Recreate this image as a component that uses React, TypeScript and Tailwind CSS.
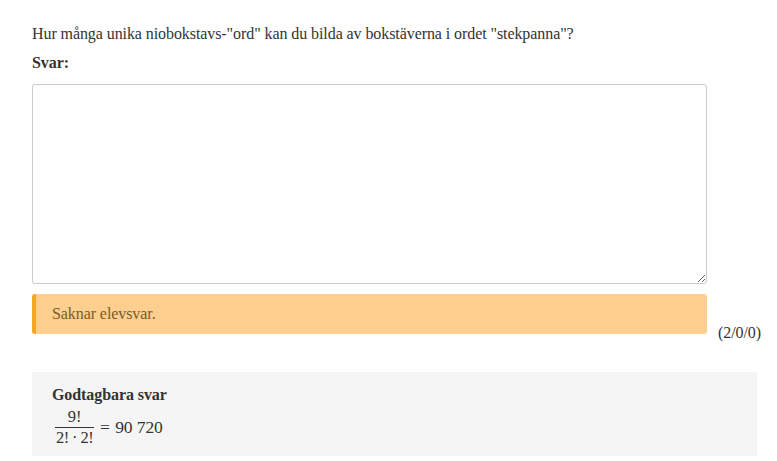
import React from "react";

// ── Fraction (9! / 2!·2!) ───────────────────────────────────────────────────
function Fraction({ num, den }: { num: string; den: string }) {
  return (
    <span className="inline-flex flex-col items-center align-middle mx-[3px]">
      <span className="px-[2px] leading-[20px] text-[16.5px]">{num}</span>
      <span className="block w-full h-px bg-[#333]" />
      <span className="px-[1px] leading-[20px] text-[16.5px] tracking-[-0.6px]">
        {den}
      </span>
    </span>
  );
}

export default function App() {
  return (
    <div
      className="min-h-screen bg-white text-[#333] text-[16px] tracking-[-0.08px] pl-8 pr-5 pt-[22px]"
      style={{ fontFamily: '"Liberation Serif", "Times New Roman", serif' }}
    >
      <p className="leading-6">
        Hur många unika niobokstavs-"ord" kan du bilda av bokstäverna i ordet
        "stekpanna"?
      </p>
      <p className="leading-6 font-bold mt-[5px]">Svar:</p>

      <textarea
        className="block mt-[9px] w-[675px] h-[200px] border border-[#ccc] rounded-[3px] bg-white resize-y outline-none"
        defaultValue=""
      />

      {/* status row */}
      <div className="flex items-end mt-[10px]">
        <div className="w-[675px] shrink-0 h-10 flex items-center pl-4 rounded-[3px] bg-[#fdcf8f] border-l-4 border-[#f5a623] text-[#7a5b28]">
          Saknar elevsvar.
        </div>
        <span className="ml-[11px] leading-5 mb-[-9px]">(2/0/0)</span>
      </div>

      {/* accepted answers */}
      <div className="mt-[38px] bg-[#f5f5f5] px-5 pt-[11px] pb-[8px]">
        <p className="font-bold leading-6">Godtagbara svar</p>
        <div className="flex items-center">
          <Fraction num="9!" den="2! · 2!" />
          <span className="ml-[3px] text-[17.5px]">
            = <span className="ml-[1px]">90 720</span>
          </span>
        </div>
      </div>
    </div>
  );
}
